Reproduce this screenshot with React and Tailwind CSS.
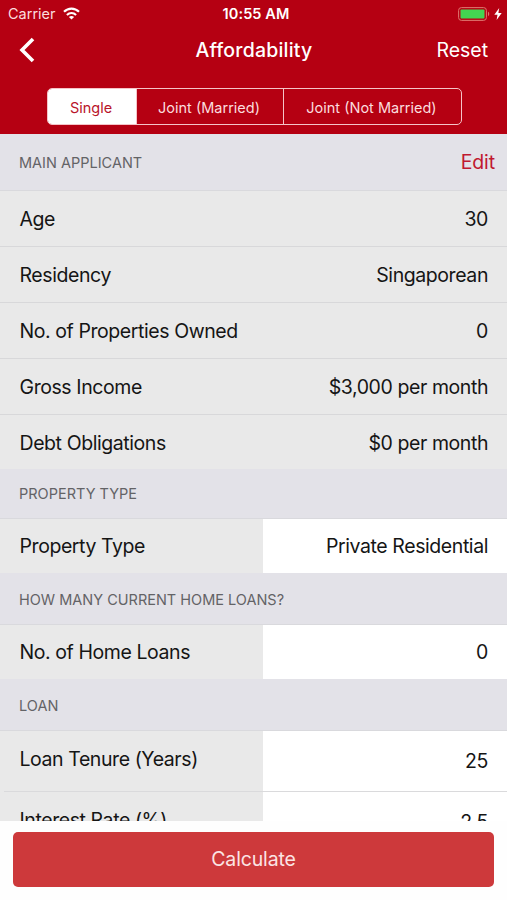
import React, { useState } from 'react';

const applicantRows = [
  { label: 'Age', value: '30' },
  { label: 'Residency', value: 'Singaporean' },
  { label: 'No. of Properties Owned', value: '0' },
  { label: 'Gross Income', value: '$3,000 per month' },
  { label: 'Debt Obligations', value: '$0 per month' },
];

const segments = [
  { name: 'Single', width: 'w-[89px]' },
  { name: 'Joint (Married)', width: 'w-[147px]' },
  { name: 'Joint (Not Married)', width: 'w-[177px]' },
];

const App = () => {
  const [selected, setSelected] = useState('Single');

  return (
    <div className="flex h-[900px] w-[507px] flex-col overflow-hidden bg-white font-['Inter',sans-serif] text-[19.5px] text-[#151515]">
      <header className="flex h-[134px] shrink-0 flex-col bg-[#b50012] text-white">
        <StatusBar />

        {/* Navigation bar */}
        <div className="grid h-[46px] grid-cols-3 items-center pr-[19px] pl-[19px]">
          <button aria-label="Back">
            <svg width="17" height="26" viewBox="0 0 17 26" fill="none" stroke="#fff" strokeWidth="3.6">
              <path d="M14 2 L3 13 L14 24" />
            </svg>
          </button>
          <h1 className="pt-px pl-px text-center font-medium tracking-[0.2px]">Affordability</h1>
          <button className="pt-px text-right tracking-[-0.05px]">Reset</button>
        </div>

        {/* Segmented control */}
        <div className="mt-[15px] ml-[47px] flex h-[37px] w-[415px] overflow-hidden rounded-[5px] border border-[#f5c4c8] text-[14.5px]">
          {segments.map((segment) => (
            <button
              key={segment.name}
              onClick={() => setSelected(segment.name)}
              className={`${segment.width} border-r border-[#f5c4c8] pt-[2px] pr-[2px] whitespace-nowrap last:border-r-0 ${
                selected === segment.name ? 'bg-white text-[#b9142a]' : 'text-[#fbdcde]'
              }`}
            >
              {segment.name}
            </button>
          ))}
        </div>
      </header>

      <main className="h-[687px] shrink-0 overflow-hidden tracking-[-0.42px]">
        <SectionHeader title="Main Applicant" height="h-[57px]" padding="pt-px">
          <button className="text-[19.5px] tracking-[-0.1px] text-[#c01830]">Edit</button>
        </SectionHeader>
        <div className="divide-y divide-[#d8d8da] bg-[#e9e9e9]">
          {applicantRows.map((row) => (
            <div key={row.label} className="flex h-[56px] items-center justify-between pt-[3px] pr-[19px] pl-[19.5px] last:h-[54px]">
              <span>{row.label}</span>
              <span>{row.value}</span>
            </div>
          ))}
        </div>

        <SectionHeader title="Property Type" height="h-[50px]" padding="pt-px" />
        <FieldRow label="Property Type" value="Private Residential" height="h-[54px]" />

        <SectionHeader title="How many current home loans?" height="h-[52px]" padding="pt-[3px]" />
        <FieldRow label="No. of Home Loans" value="0" height="h-[54px]" />

        <SectionHeader title="Loan" height="h-[52px]" padding="pt-[3px]" />
        <FieldRow label="Loan Tenure (Years)" value="25" height="h-[60px]" labelPadding="pb-[5px]" />
        <div className="h-px bg-[#e9e9e9] pl-[4px]">
          <div className="h-px bg-[#dadadc]" />
        </div>
        <FieldRow label="Interest Rate (%)" value="2.5" height="h-[60px]" labelPadding="pb-[5px]" />
      </main>

      <footer className="flex grow items-start bg-[#fefefe] px-[13px] pt-[11px]">
        <button className="h-[55px] w-full rounded-[5px] bg-[#cd393b] pt-px tracking-[-0.15px] text-[#fbe4e4]">
          Calculate
        </button>
      </footer>
    </div>
  );
};

// Clock, signal and battery
const StatusBar = () => (
  <div className="grid h-[27px] grid-cols-3 items-center pr-[5px] pl-[8px] text-[14.5px]">
    <div className="flex items-center gap-[7px]">
      <span className="text-[#fbdcde]">Carrier</span>
      <svg width="17" height="13" viewBox="0 0 17 13" fill="none" stroke="#fff" strokeWidth="2.1">
        <path d="M1 4.8 C5.2 .5 11.8 .5 16 4.8" />
        <path d="M3.9 7.9 C6.5 5.4 10.5 5.4 13.1 7.9" />
        <path d="M8.5 12.6 L5.9 10 C7.4 8.7 9.6 8.7 11.1 10 Z" fill="#fff" stroke="none" />
      </svg>
    </div>
    <span className="pl-[2px] text-center font-semibold tracking-[0.1px]">10:55 AM</span>
    <div className="flex items-center justify-end gap-[4px]">
      <svg width="32" height="14" viewBox="0 0 32 14">
        <rect x=".6" y=".6" width="27.8" height="12.8" rx="2.8" fill="none" stroke="#df7770" />
        <rect x="2.5" y="2.5" width="24" height="9" rx="1" fill="#43d551" />
        <path d="M30 4.8 C31.6 5.4 31.6 8.6 30 9.2 Z" fill="#df7770" />
      </svg>
      <svg width="8" height="12" viewBox="0 0 8 12" fill="#fff">
        <path d="M5.2 0 L.3 6.8 H3.5 L2.6 12 L7.7 4.9 H4.4 Z" />
      </svg>
    </div>
  </div>
);

const SectionHeader = ({ title, height, padding, children }) => (
  <div className={`${height} ${padding} flex items-center justify-between border-b border-[#d9d9dd] bg-[#e3e2e8] pr-[12px] pl-[19px]`}>
    <h2 className="text-[14.5px] tracking-normal text-[#636366] uppercase">{title}</h2>
    {children}
  </div>
);

const FieldRow = ({ label, value, height, labelPadding = 'pb-0' }) => (
  <div className={`${height} flex`}>
    <div className={`${labelPadding} flex w-[263px] items-center bg-[#e9e9e9] pt-[2px] pl-[19.5px]`}>{label}</div>
    <div className="flex flex-1 items-center justify-end bg-white pt-px pr-[19px]">{value}</div>
  </div>
);

export default App;
